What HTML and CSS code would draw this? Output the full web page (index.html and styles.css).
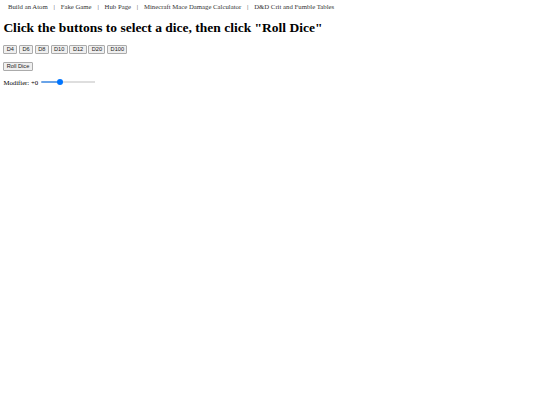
FILE: index.html
```html
<!DOCTYPE html>
<html lang="en">
<head>
<meta charset="utf-8">
<title>Dice Roller</title>
<link rel="stylesheet" href="styles.css">
</head>
<body>
  <nav class="nav">
    <a class="nav-link" href="#">Build an Atom</a>
    <span class="nav-sep">|</span>
    <a class="nav-link" href="#">Fake Game</a>
    <span class="nav-sep">|</span>
    <a class="nav-link" href="#">Hub Page</a>
    <span class="nav-sep">|</span>
    <a class="nav-link" href="#">Minecraft Mace Damage Calculator</a>
    <span class="nav-sep">|</span>
    <a class="nav-link" href="#">D&amp;D Crit and Fumble Tables</a>
  </nav>

  <h1 class="title">Click the buttons to select a dice, then click "Roll Dice"</h1>

  <div class="dice-row">
    <button class="btn" type="button">D4</button>
    <button class="btn" type="button">D6</button>
    <button class="btn" type="button">D8</button>
    <button class="btn" type="button">D10</button>
    <button class="btn" type="button">D12</button>
    <button class="btn" type="button">D20</button>
    <button class="btn" type="button">D100</button>
  </div>

  <div class="roll-row">
    <button class="btn" type="button">Roll Dice</button>
  </div>

  <div class="mod-row">
    <label class="mod-label" for="modifier">Modifier: +0</label>
    <input class="mod-slider" id="modifier" type="range" min="-10" max="20" value="0" style="--fill: 36%">
  </div>
</body>
</html>
```
FILE: styles.css
```css
html, body {
  background: #ffffff;
}

body {
  margin: 3.375px;
  font-family: "Liberation Serif", "Times New Roman", serif;
  font-size: 6.75px;
  color: #000000;
}

/* top navigation strip */
.nav {
  display: flex;
  align-items: center;
  gap: 5.8px;
  padding: 0 4.6px;
  height: 7.8px;
  line-height: 7.8px;
  white-space: nowrap;
}

.nav-link {
  color: #333333;
  text-decoration: none;
}

.nav-sep {
  color: #444444;
}

.title {
  margin: 9px 0 9.2px;
  font-size: 13.5px;
  line-height: 15.5px;
  font-weight: bold;
}

/* dice selector buttons */
.dice-row {
  display: flex;
  gap: 1.7px;
}

.roll-row {
  display: flex;
  margin-top: 8.2px;
}

.btn {
  box-sizing: border-box;
  height: 8.9px;
  margin: 0;
  padding: 0 2.45px;
  font-family: "Liberation Sans", Arial, sans-serif;
  font-size: 5.625px;
  line-height: 6.5px;
  color: #1a1a1a;
  background: #efefef;
  border: 1px solid #ababab;
  border-radius: 1px;
}

/* modifier slider */
.mod-row {
  display: flex;
  align-items: center;
  gap: 2.5px;
  margin-top: 8.1px;
  height: 7.8px;
  line-height: 7.8px;
}

.mod-slider {
  -webkit-appearance: none;
  appearance: none;
  width: 54px;
  height: 2.6px;
  margin: 0 0 1.6px 0;
  border-radius: 2px;
  background: linear-gradient(to right, #0075ff 0, #0075ff var(--fill), #ebebeb var(--fill), #ebebeb 100%);
  box-shadow: inset 0 0 0 0.5px #d2d2d2;
  outline: none;
}

.mod-slider::-webkit-slider-thumb {
  -webkit-appearance: none;
  appearance: none;
  width: 6px;
  height: 6px;
  border-radius: 50%;
  background: #0075ff;
  border: none;
}
```
